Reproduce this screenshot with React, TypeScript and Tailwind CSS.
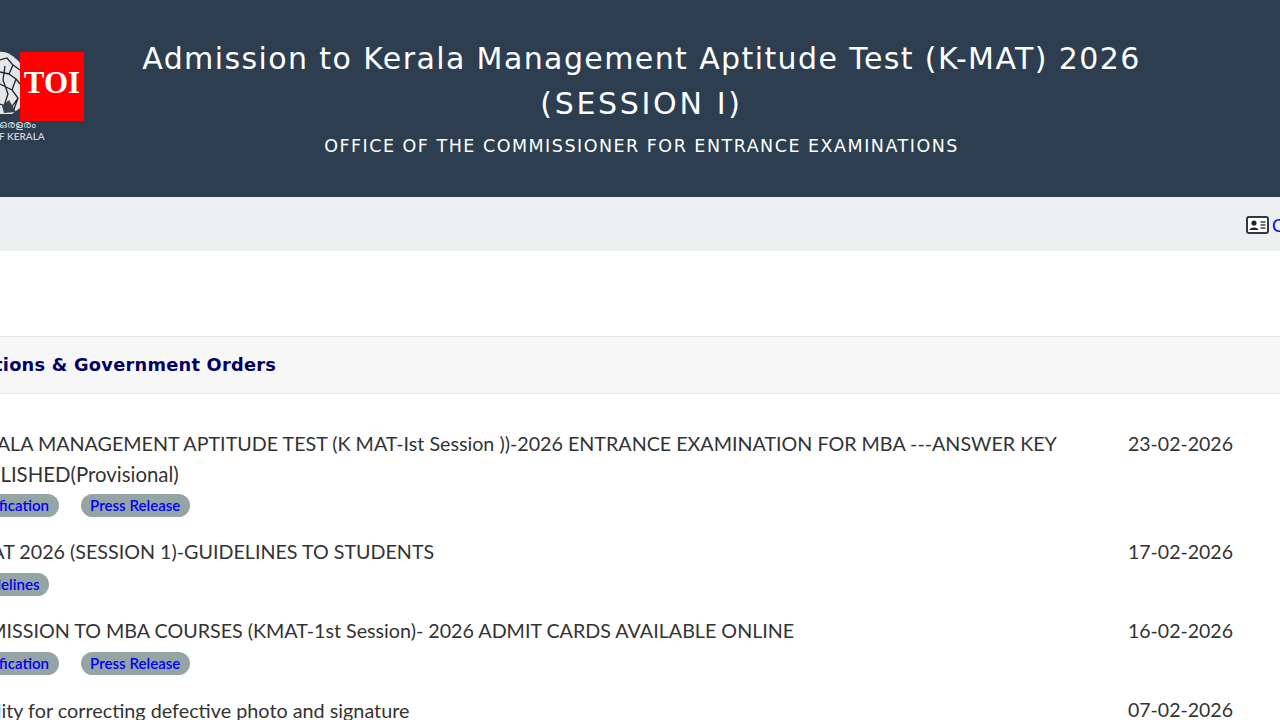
import React from "react";

function Pill({ label }: { label: string }) {
  return (
    <span className="inline-flex h-[23px] items-center rounded-full bg-[#95a5a6] px-[9.5px] text-[15.1px] font-semibold leading-none text-[#0000ff]">
      {label}
    </span>
  );
}

function Row({ title, date, pills, minH, pillGap = "mt-[6px]", size = "text-[19.7px]" }: { title: React.ReactNode; date: string; pills: string[]; minH: string; pillGap?: string; size?: string }) {
  return (
    <div className={`flex ${minH}`}>
      <div className="w-[1168px] shrink-0 pr-[40px]">
        <div className={`${size} leading-[30px] text-[#333333]`}>{title}</div>
        {pills.length > 0 && (
          <div className={`${pillGap} flex gap-[22px]`}>
            {pills.map((p) => (
              <Pill key={p} label={p} />
            ))}
          </div>
        )}
      </div>
      <div className="text-[19.5px] leading-[30px] text-[#333333]">{date}</div>
    </div>
  );
}

export default function App() {
  return (
    <div className="relative h-[720px] w-[1280px] overflow-hidden bg-white font-['Lato','Liberation_Sans',sans-serif]">
      <header className="flex h-[197px] flex-col items-center bg-[#2c3e50] pt-[36px] text-white">
        <h1 className="ml-[3px] w-[1040px] text-center font-['DejaVu_Sans',sans-serif] text-[30px] font-normal leading-[45px] tracking-[1.4px]">
          Admission to Kerala Management Aptitude Test (K-MAT) 2026 <span className="tracking-[2.7px]">(SESSION I)</span>
        </h1>
        <p className="ml-[3px] mt-[8px] font-['DejaVu_Sans',sans-serif] text-[17.5px] leading-[24px] tracking-[1.5px]">
          OFFICE OF THE COMMISSIONER FOR ENTRANCE EXAMINATIONS
        </p>
      </header>

      <div className="absolute left-0 top-[46px] h-[100px] w-[50px] overflow-hidden">
        <svg viewBox="0 0 42 72" className="h-[72px] w-[42px]" fill="none">
          <path d="M0 6 C6 5 14 10 20 17 L20 62 L12 68 L0 68 Z" fill="#e4e6e8" />
          <path d="M0 14 L7 12 L13 19 L9 28 L16 33 L12 44 L18 52 L11 62 L0 58 M0 26 L9 28 M0 38 L12 44 M5 20 L3 34 L8 48 L4 60 M13 19 L20 24 M16 33 L20 38 M18 52 L13 66" stroke="#1b2430" strokeWidth="1.3" />
          <path d="M2 60 L9 54 L16 66 L4 67 Z" fill="#39414c" />
        </svg>
        <div className="mt-[1px] text-[10.5px] leading-[11px] text-[#cfd4d8]">
          <div className="-ml-[1px] whitespace-nowrap">ഒരളരം</div>
          <div className="-ml-[1px] mt-[1px] whitespace-nowrap text-[10px] font-semibold">F KERALA</div>
        </div>
      </div>
      <div className="absolute left-[20px] top-[52px] flex h-[69px] w-[64px] items-center justify-center bg-[#ff0000] pb-[8px] font-['Liberation_Serif',serif] text-[31px] font-bold leading-none text-white">
        TOI
      </div>

      <nav className="flex h-[54px] items-center justify-end bg-[#ecf0f1] pt-[2px]">
        <div className="-mr-[60px] flex w-[94px] items-center gap-[3px]">
          <svg width="23" height="18" viewBox="0 0 23 18" className="shrink-0">
            <rect x="1" y="1" width="21" height="16" rx="2" fill="#fff" stroke="#2f3a45" strokeWidth="2" />
            <circle cx="8" cy="7" r="2.6" fill="#222" />
            <path d="M3.5 14 C3.5 10.5 12.5 10.5 12.5 14 Z" fill="#222" />
            <path d="M14.5 6 H19.5 M14.5 9 H19.5 M14.5 12 H19.5" stroke="#444" strokeWidth="1.4" />
          </svg>
          <span className="whitespace-nowrap text-[18px] text-[#0000ff]">Candidate</span>
        </div>
      </nav>

      <section className="mt-[85px]">
        <div className="flex h-[58px] items-center border-y border-[#e3e6e8] bg-[#f7f7f7] pt-[1px]">
          <h2 className="-ml-[86px] whitespace-nowrap font-['DejaVu_Sans',sans-serif] text-[17.8px] font-bold tracking-[0.25px] text-[#000066]">
            Notifications &amp; Government Orders
          </h2>
        </div>

        <div className="-ml-[40px] mt-[35px] w-[1400px]">
          <Row
            minH="min-h-[108px]"
            pillGap="mt-[4px]"
            date="23-02-2026"
            pills={["Notification", "Press Release"]}
            title={<>KERALA MANAGEMENT APTITUDE TEST (K MAT-Ist Session ))-2026 ENTRANCE EXAMINATION FOR MBA ---ANSWER KEY<br /><span className="text-[20.4px]">PUBLISHED(Provisional)</span></>}
          />
          <Row minH="min-h-[79px]" date="17-02-2026" pills={["Guidelines"]} title="KMAT 2026 (SESSION 1)-GUIDELINES TO STUDENTS" />
          <Row minH="min-h-[79px]" date="16-02-2026" pills={["Notification", "Press Release"]} title="ADMISSION TO MBA COURSES (KMAT-1st Session)- 2026 ADMIT CARDS AVAILABLE ONLINE" />
          <Row minH="min-h-[60px]" size="ml-[3px] text-[19.8px]" date="07-02-2026" pills={[]} title="Facility for correcting defective photo and signature" />
        </div>
      </section>
    </div>
  );
}
